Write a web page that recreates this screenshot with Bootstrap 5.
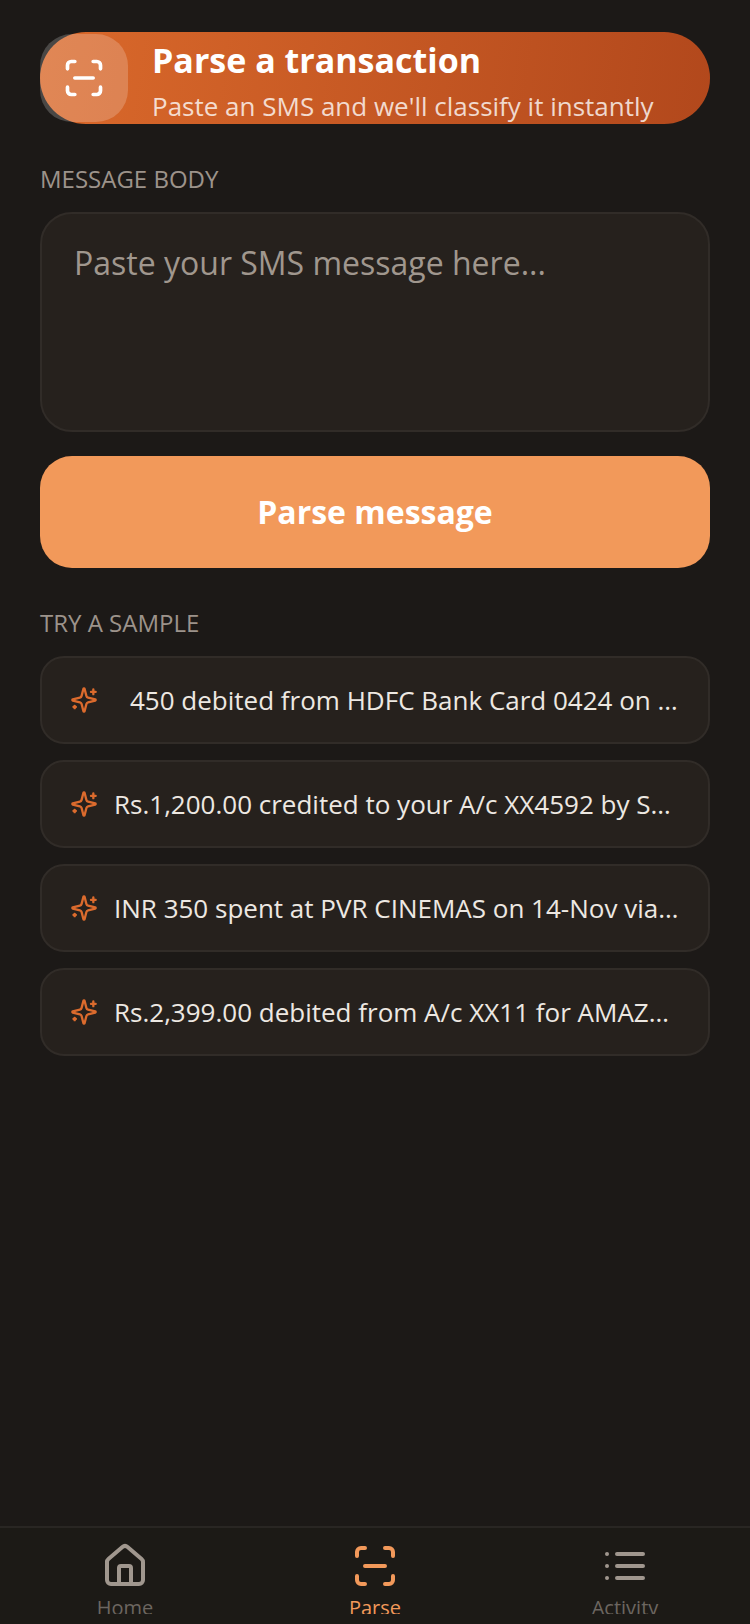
<!DOCTYPE html>
<html lang="en">
<head>
<meta charset="utf-8">
<meta name="viewport" content="width=device-width, initial-scale=1">
<title>Parse a transaction</title>
<link href="https://cdn.jsdelivr.net/npm/bootstrap@5.3.0/dist/css/bootstrap.min.css" rel="stylesheet">
<style>
  body { background: #1c1917; color: #ede8e2; font-family: "Open Sans", "Noto Sans", sans-serif; }
  .screen { padding: 32px 40px; }
  .hero { min-height: 92px; border-radius: 46px; color: #fff; background: linear-gradient(98deg, #da692b, #b2481c); }
  .hero-tile { width: 88px; height: 88px; border-radius: 32px; background: rgba(255, 255, 255, .2); }
  .hero-title { font-size: 34px; line-height: 48px; }
  .hero-sub { font-size: 26px; line-height: 36px; margin-top: 4px; color: rgba(255, 255, 255, .78); }
  .section-label { display: block; font-size: 24px; line-height: 30px; font-weight: 400; margin: 40px 0 18px; color: #9c938b; }
  .message-box, .message-box:focus { height: 220px; padding: 24px 32px; border: 2px solid #312c28; border-radius: 32px; background: #26211d; color: #ede8e2; font-size: 32px; line-height: 50px; resize: none; }
  .message-box::placeholder { color: #a0978e; opacity: 1; }
  .parse-btn, .parse-btn:hover { height: 112px; border: 0; border-radius: 32px; background: #f2995a; color: #fff; font-size: 32px; font-weight: 700; }
  .sample { height: 88px; padding: 0 28px; border: 2px solid #312c28; border-radius: 24px; background: #26211d; color: #ede8e2; font-size: 26px; line-height: 36px; }
  .sample svg { color: #dc6b2d; }
  .tabs { padding: 14px 0 10px; border-top: 2px solid #292623; background: #1c1a16; }
  .tab { height: 72px; color: #a0978e; font-size: 20px; line-height: 36px; }
  .tab span { color: #6c6660; }
  .tab.active, .tab.active span { color: #f2995a; }
  svg { fill: none; stroke: currentColor; stroke-width: 2; stroke-linecap: round; stroke-linejoin: round; }
</style>
</head>
<body class="min-vh-100 d-flex flex-column">
<svg class="d-none" aria-hidden="true">
  <symbol id="scan" viewBox="0 0 24 24"><path d="M3 7V5a2 2 0 0 1 2-2h2M17 3h2a2 2 0 0 1 2 2v2M21 17v2a2 2 0 0 1-2 2h-2M7 21H5a2 2 0 0 1-2-2v-2M7 12h10"/></symbol>
  <symbol id="sparkles" viewBox="0 0 24 24"><path d="M9.937 15.5A2 2 0 0 0 8.5 14.063l-6.135-1.582a.5.5 0 0 1 0-.962L8.5 9.936A2 2 0 0 0 9.937 8.5l1.582-6.135a.5.5 0 0 1 .963 0L14.063 8.5A2 2 0 0 0 15.5 9.937l6.135 1.581a.5.5 0 0 1 0 .964L15.5 14.063a2 2 0 0 0-1.437 1.437l-1.582 6.135a.5.5 0 0 1-.963 0zM20 3v4M22 5h-4M4 17v2M5 18H3"/></symbol>
  <symbol id="house" viewBox="0 0 24 24"><path d="M15 21v-8a1 1 0 0 0-1-1h-4a1 1 0 0 0-1 1v8M3 10a2 2 0 0 1 .709-1.528l7-5.999a2 2 0 0 1 2.582 0l7 5.999A2 2 0 0 1 21 10v9a2 2 0 0 1-2 2H5a2 2 0 0 1-2-2z"/></symbol>
  <symbol id="list" viewBox="0 0 24 24"><path d="M8 6h13M8 12h13M8 18h13M3 6h.01M3 12h.01M3 18h.01"/></symbol>
</svg>

<main class="screen flex-grow-1">
  <header class="hero d-flex align-items-center gap-4">
    <div class="hero-tile d-flex align-items-center justify-content-center flex-shrink-0">
      <svg width="44" height="44" aria-hidden="true"><use href="#scan"/></svg>
    </div>
    <div class="pt-1">
      <h1 class="hero-title fw-bold mb-0">Parse a transaction</h1>
      <p class="hero-sub mb-0">Paste an SMS and we'll classify it instantly</p>
    </div>
  </header>

  <form>
    <label class="section-label" for="message">MESSAGE BODY</label>
    <textarea class="form-control message-box" id="message" placeholder="Paste your SMS message here..."></textarea>
    <button class="btn parse-btn w-100 mt-4" type="button">Parse message</button>
  </form>

  <h2 class="section-label">TRY A SAMPLE</h2>
  <div class="d-flex flex-column gap-3">
    <button class="sample w-100 d-flex align-items-center gap-3" type="button">
      <svg class="flex-shrink-0" width="28" height="28" aria-hidden="true"><use href="#sparkles"/></svg>
      <span class="text-truncate ps-3">450 debited from HDFC Bank Card 0424 on 14-Nov</span>
    </button>
    <button class="sample w-100 d-flex align-items-center gap-3" type="button">
      <svg class="flex-shrink-0" width="28" height="28" aria-hidden="true"><use href="#sparkles"/></svg>
      <span class="text-truncate">Rs.1,200.00 credited to your A/c XX4592 by SALARY</span>
    </button>
    <button class="sample w-100 d-flex align-items-center gap-3" type="button">
      <svg class="flex-shrink-0" width="28" height="28" aria-hidden="true"><use href="#sparkles"/></svg>
      <span class="text-truncate">INR 350 spent at PVR CINEMAS on 14-Nov via UPI</span>
    </button>
    <button class="sample w-100 d-flex align-items-center gap-3" type="button">
      <svg class="flex-shrink-0" width="28" height="28" aria-hidden="true"><use href="#sparkles"/></svg>
      <span class="text-truncate">Rs.2,399.00 debited from A/c XX11 for AMAZON</span>
    </button>
  </div>
</main>

<nav class="tabs">
  <div class="row g-0 text-center">
    <a class="tab col overflow-hidden text-decoration-none d-flex flex-column align-items-center" href="#home">
      <svg class="flex-shrink-0" width="48" height="48" aria-hidden="true"><use href="#house"/></svg>
      <span>Home</span>
    </a>
    <a class="tab active col overflow-hidden text-decoration-none d-flex flex-column align-items-center" href="#parse" aria-current="page">
      <svg class="flex-shrink-0" width="48" height="48" aria-hidden="true"><use href="#scan"/></svg>
      <span>Parse</span>
    </a>
    <a class="tab col overflow-hidden text-decoration-none d-flex flex-column align-items-center" href="#activity">
      <svg class="flex-shrink-0" width="48" height="48" aria-hidden="true"><use href="#list"/></svg>
      <span>Activity</span>
    </a>
  </div>
</nav>
<script src="https://cdn.jsdelivr.net/npm/bootstrap@5.3.0/dist/js/bootstrap.bundle.min.js"></script>
</body>
</html>
